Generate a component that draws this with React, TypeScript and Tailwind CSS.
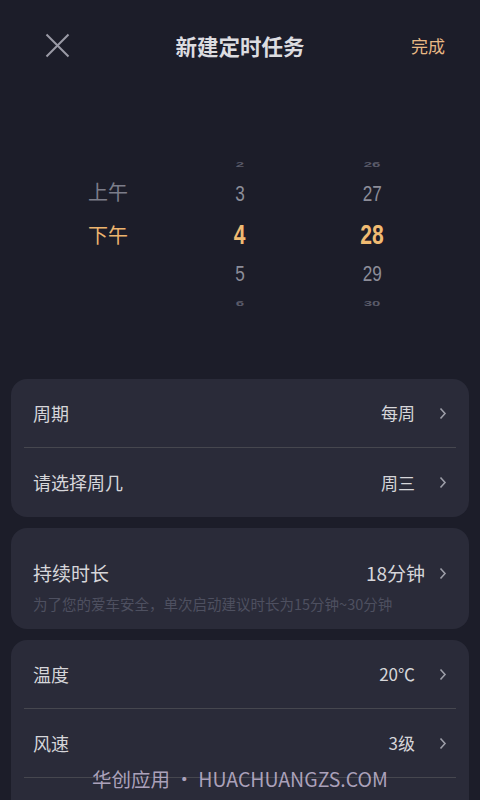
const cn = '"Noto Sans CJK SC", "Noto Sans", sans-serif';
const num = '"Liberation Sans", Arial, sans-serif';

const Chevron = ({ gap = "ml-[24px]" }: { gap?: string }) => (
  <svg width="8" height="13" viewBox="0 0 8 13" className={gap}>
    <path d="M1.5 1.5 L6 6.5 L1.5 11.5" fill="none" stroke="#9d9ea8" strokeWidth="1.6" />
  </svg>
);

const Row = ({ label, value, last }: { label?: string; value?: string; last?: boolean }) => (
  <div className={`mx-[13px] h-[69px] flex items-center pl-[9px] pr-[9px] ${last ? "" : "border-b border-[#46474f]"}`}>
    <span className="text-[18px] text-[#d6d6da]">{label}</span>
    <span className="ml-auto text-[17px] text-[#d6d6da]">{value}</span>
    {value && <Chevron />}
  </div>
);

const Wheel = ({ items, sel }: { items: string[]; sel: number }) => {
  const heights = ["h-[20px]", "h-[40px]", "h-[42px]", "h-[36px]", "h-[22px]"];
  return (
    <div className="flex flex-col items-center pt-[62px]" style={{ fontFamily: num }}>
      {items.map((t, i) => {
        const d = Math.abs(i - sel);
        const cls =
          d === 0
            ? "text-[27px] font-semibold text-[#f0bb72] scale-x-[0.78]"
            : d === 1
            ? "text-[22px] text-[#8c8d99] scale-x-[0.78]"
            : "text-[15px] font-bold text-[#5a5b69] scale-y-[0.5]";
        return (
          <div key={t} className={`${heights[i]} flex items-center justify-center`}>
            <span className={`inline-block leading-none ${cls}`}>{t}</span>
          </div>
        );
      })}
    </div>
  );
};

export default function App() {
  return (
    <div className="relative w-[480px] h-[800px] overflow-hidden bg-[#1c1d29]" style={{ fontFamily: cn }}>
      {/* header */}
      <div className="h-[92px] flex items-center px-[45px] relative">
        <svg width="25" height="25" viewBox="0 0 25 25" className="-mt-[1px]">
          <path d="M1.5 1.5 L23.5 23.5 M23.5 1.5 L1.5 23.5" stroke="#9a9aa6" strokeWidth="2" fill="none" />
        </svg>
        <div className="absolute left-0 right-0 text-center text-[21.5px] font-bold text-[#dcdce0] pointer-events-none">新建定时任务</div>
        <span className="ml-auto -mr-[10px] text-[17px] text-[#e8b985]">完成</span>
      </div>

      {/* picker */}
      <div className="h-[287px] grid grid-cols-[216px_48px_216px]">
        <div className="flex flex-col items-center pt-[80px]">
          <div className="h-[40px] flex items-center text-[20px] text-[#7c7d8a]">上午</div>
          <div className="h-[42px] mt-[2px] flex items-center text-[20px] text-[#edb46e]">下午</div>
        </div>
        <Wheel items={["2", "3", "4", "5", "6"]} sel={2} />
        <Wheel items={["26", "27", "28", "29", "30"]} sel={2} />
      </div>

      {/* cards */}
      <div className="flex flex-col gap-[11px] px-[11px]">
        <div className="rounded-[16px] bg-[#2a2b39]">
          <Row label="周期" value="每周" />
          <Row label="请选择周几" value="周三" last />
        </div>
        <div className="rounded-[16px] bg-[#2a2b39] h-[101px] px-[22px] pt-[31px]">
          <div className="flex items-center">
            <span className="text-[19px] text-[#d6d6da]">持续时长</span>
            <span className="ml-auto text-[19px] text-[#d6d6da]">18分钟</span>
            <Chevron gap="ml-[14px]" />
          </div>
          <div className="mt-[5px] text-[14.5px] text-[#4e5060] whitespace-nowrap">为了您的爱车安全，单次启动建议时长为15分钟~30分钟</div>
        </div>
        <div className="rounded-[16px] bg-[#2a2b39]">
          <Row label="温度" value="20℃" />
          <Row label="风速" value="3级" />
          <Row last />
        </div>
      </div>

      {/* watermark */}
      <div className="absolute left-0 right-0 top-[764px] text-center text-[19.5px] text-[#c3b8d2]/85">
        华创应用 • HUACHUANGZS.COM
      </div>
    </div>
  );
}
